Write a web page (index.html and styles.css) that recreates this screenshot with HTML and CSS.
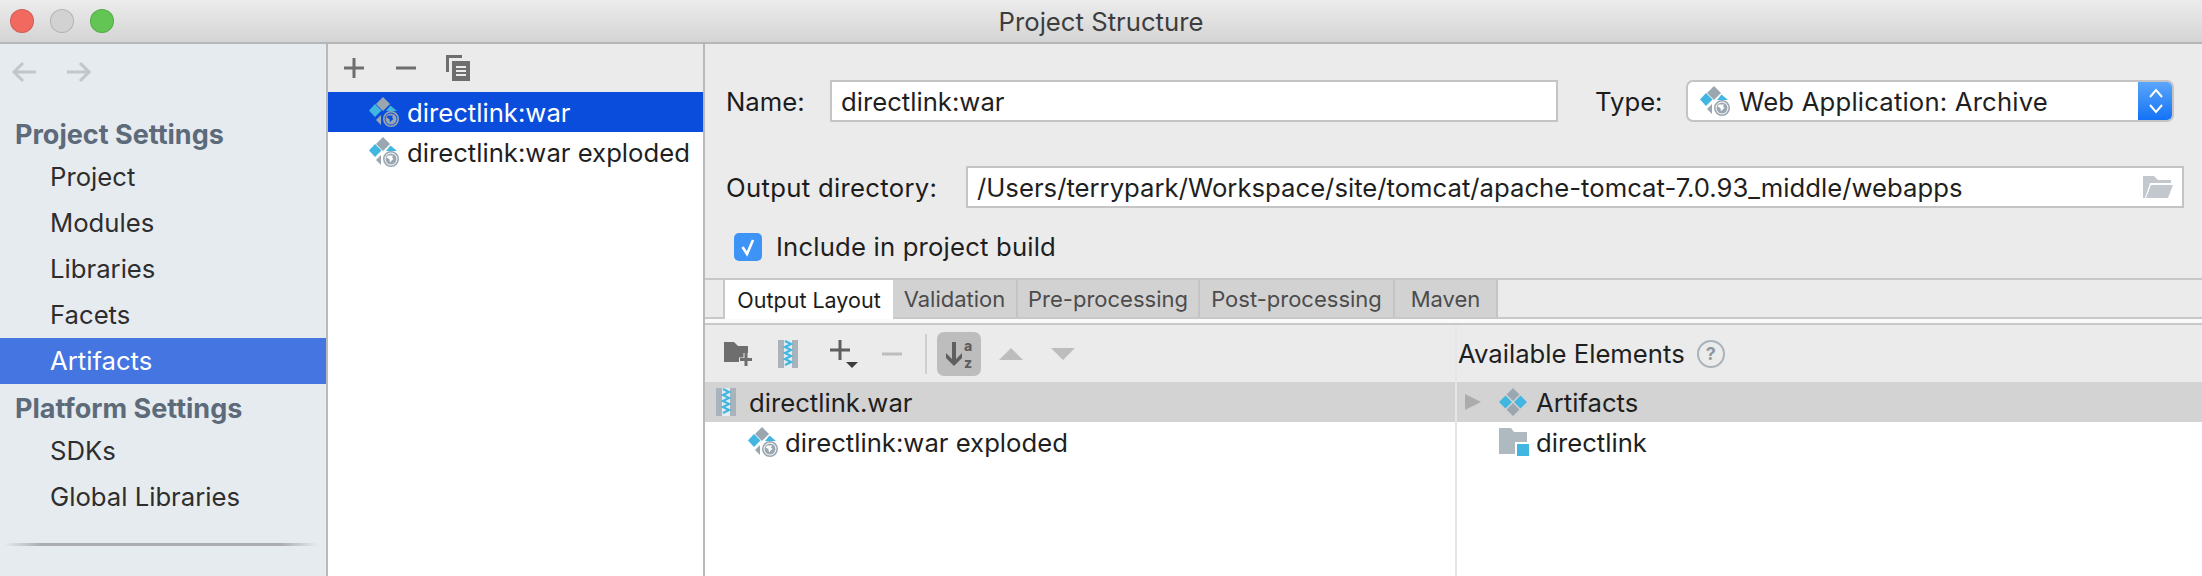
FILE: index.html
```html
<!DOCTYPE html>
<html lang="en">
<head>
<meta charset="utf-8">
<title>Project Structure</title>
<link rel="stylesheet" href="styles.css">
</head>
<body>
<svg class="defs" width="0" height="0" aria-hidden="true">
  <defs>
    <symbol id="web" viewBox="0 0 30 30">
      <path d="M14 0l7 7-7 7-7-7z" fill="#9aa7b0"/>
      <path d="M6 7l6.500 6.500L6 20l-6-6.500z" fill="#40b6e0"/>
      <path d="M21.500 8.500L28 14H17z" fill="#40b6e0"/>
      <path d="M12 18v10L7 23z" fill="#9aa7b0"/>
      <circle cx="22" cy="22" r="7.200" fill="none" stroke="#9aa7b0" stroke-width="1.600"/>
      <path fill-rule="evenodd" d="M22 16.500a5.500 5.500 0 1 1 0 11a5.500 5.500 0 1 1 0-11zM19 18.500l-1.500 2 3 1.500 .5 3.500 2-2.500 1.500-1-1.500-1.500 1-2z" fill="#9aa7b0"/>
    </symbol>
    <symbol id="zip" viewBox="0 0 20 28">
      <path d="M0 0h6v28H0zM14 0h6v28h-6z" fill="#a8b3bb"/>
      <path d="M6 0h8v28H6z" fill="#e4ecf0"/>
      <path d="M7 1l6 3-6 3 6 3-6 3 6 3-6 3 6 3-6 3" fill="none" stroke="#40b6e0" stroke-width="2.200"/>
    </symbol>
  </defs>
</svg>
<div class="window">
  <header class="titlebar">
    <div class="lights"><span class="light red"></span><span class="light gray"></span><span class="light green"></span></div>
    <div class="title">Project Structure</div>
  </header>
  <div class="main">
    <aside class="sidebar">
      <div class="nav-arrows">
        <svg width="28" height="24" viewBox="0 0 28 24"><path d="M26 12H4M13 3l-9 9 9 9" fill="none" stroke="#c3c6c9" stroke-width="3"/></svg>
        <svg width="28" height="24" viewBox="0 0 28 24"><path d="M2 12h22M15 3l9 9-9 9" fill="none" stroke="#c3c6c9" stroke-width="3"/></svg>
      </div>
      <div class="section first">Project Settings</div>
      <div class="item">Project</div>
      <div class="item">Modules</div>
      <div class="item">Libraries</div>
      <div class="item">Facets</div>
      <div class="item active">Artifacts</div>
      <div class="section platform">Platform Settings</div>
      <div class="item">SDKs</div>
      <div class="item">Global Libraries</div>
      <div class="sidebar-rule"></div>
    </aside>
    <section class="list-panel">
      <div class="list-toolbar">
        <svg class="ic-plus" width="20" height="20" viewBox="0 0 20 20"><path d="M8.500 0h3v8.500H20v3h-8.500V20h-3v-8.500H0v-3h8.500z" fill="#6e6e6e"/></svg>
        <svg class="ic-minus" width="20" height="20" viewBox="0 0 20 20"><path d="M0 8.500h20v3H0z" fill="#6e6e6e"/></svg>
        <svg class="ic-copy" width="24" height="26" viewBox="0 0 24 26"><path d="M0 0h16v3H3v14H0z" fill="#6e6e6e"/><path fill-rule="evenodd" d="M6 6h18v20H6zM10 11v2h10v-2zM10 15v2h10v-2zM10 19v2h10v-2z" fill="#6e6e6e"/></svg>
      </div>
      <div class="list-row selected"><svg class="web-icon" width="30" height="30"><use href="#web"/></svg><span>directlink:war</span></div>
      <div class="list-row"><svg class="web-icon" width="30" height="30"><use href="#web"/></svg><span>directlink:war exploded</span></div>
    </section>
    <section class="detail">
      <div class="form">
        <div class="form-row name-row">
          <label class="lbl lbl-name">Name:</label>
          <div class="input name-input">directlink:war</div>
          <label class="lbl lbl-type">Type:</label>
          <div class="combo">
            <svg class="web-icon" width="30" height="30"><use href="#web"/></svg>
            <span class="combo-text">Web Application: Archive</span>
            <span class="combo-btn"><svg width="16" height="30" viewBox="0 0 16 30"><path d="M2 11l6-7 6 7M2 19l6 7 6-7" fill="none" stroke="#fff" stroke-width="2"/></svg></span>
          </div>
        </div>
        <div class="form-row dir-row">
          <label class="lbl lbl-dir">Output directory:</label>
          <div class="input dir-input">
            <span>/Users/terrypark/Workspace/site/tomcat/apache-tomcat-7.0.93_middle/webapps</span>
            <svg width="30" height="22" viewBox="0 0 30 22"><path d="M0 0h11l4 4h13v3H7L2 22H0z" fill="#c2c8cd"/><path d="M8 9h22l-5 13H3z" fill="#c2c8cd"/></svg>
          </div>
        </div>
        <div class="check-row">
          <span class="check"><svg width="28" height="28" viewBox="0 0 28 28"><path d="M8.500 14l4.500 7 6-14" fill="none" stroke="#fff" stroke-width="2.600"/></svg></span>
          <span class="check-label">Include in project build</span>
        </div>
      </div>
      <div class="tabs">
        <div class="tab current">Output Layout</div>
        <div class="tab t-val">Validation</div>
        <div class="tab t-pre">Pre-processing</div>
        <div class="tab t-post">Post-processing</div>
        <div class="tab t-mvn">Maven</div>
      </div>
      <div class="tabs-gap"></div>
      <div class="layout">
        <div class="layout-left">
          <div class="layout-toolbar">
            <svg class="t-folder" width="28" height="24" viewBox="0 0 28 24"><path d="M0 0h10l4 4h10v7h-4.500v4.500H15V20H0z" fill="#6e6e6e"/><path d="M20.500 11h3v5H28v3h-4.500v5h-3v-5H16v-3h4.500z" fill="#6e6e6e"/></svg>
            <svg class="t-zip" width="20" height="28"><use href="#zip"/></svg>
            <svg class="t-plus" width="28" height="28" viewBox="0 0 28 28"><path d="M8.500 0h3v8.500H20v3h-8.500V20h-3v-8.500H0v-3h8.500z" fill="#5f5f5f"/><path d="M16 22h12l-6 6z" fill="#3c3c3c"/></svg>
            <svg class="t-minus" width="20" height="20" viewBox="0 0 20 20"><path d="M0 8.500h20v3H0z" fill="#bdbdbd"/></svg>
            <span class="t-sep"></span>
            <span class="t-sort">
              <svg width="16" height="24" viewBox="0 0 16 24"><path d="M6 0h4v17l6-6v5l-8 8-8-8v-5l6 6z" fill="#5f5f5f"/></svg>
              <span class="az"><span>a</span><span>z</span></span>
            </span>
            <svg class="t-up" width="24" height="12" viewBox="0 0 24 12"><path d="M12 0l12 12H0z" fill="#bdbdbd"/></svg>
            <svg class="t-down" width="24" height="12" viewBox="0 0 24 12"><path d="M0 0h24L12 12z" fill="#bdbdbd"/></svg>
          </div>
          <div class="tree-row hl root-row"><svg width="20" height="28"><use href="#zip"/></svg><span>directlink.war</span></div>
          <div class="tree-row child-row"><svg class="web-icon" width="30" height="30"><use href="#web"/></svg><span>directlink:war exploded</span></div>
        </div>
        <div class="layout-right">
          <div class="avail-head"><span>Available Elements</span><span class="help">?</span></div>
          <div class="tree-row hl avail-row">
            <svg class="arrow" width="16" height="16" viewBox="0 0 16 16"><path d="M0 0l16 8-16 8z" fill="#acacac"/></svg>
            <svg width="28" height="28" viewBox="0 0 28 28"><path d="M14 0l6.500 6.500L14 13 7.500 6.500zM14 15l6.500 6.500L14 28l-6.500-6.500z" fill="#9aa7b0"/><path d="M6.500 7.500L13 14l-6.500 6.500L0 14zM21.500 7.500L28 14l-6.500 6.500L15 14z" fill="#40b6e0"/></svg>
            <span>Artifacts</span>
          </div>
          <div class="tree-row avail-row no-arrow">
            <svg width="30" height="28" viewBox="0 0 30 28"><path d="M0 0h12l3 4h13v22H0z" fill="#aeb9c0"/><path d="M16 14h16v14H16z" fill="#fff"/><path d="M18 16h12v12H18z" fill="#40b6e0"/></svg>
            <span>directlink</span>
          </div>
        </div>
      </div>
    </section>
  </div>
</div>
</body>
</html>
```
FILE: styles.css
```css
* { box-sizing: border-box; }
html, body { margin: 0; padding: 0; }
body { width: 2202px; height: 576px; overflow: hidden; font-family: Inter, "Liberation Sans", sans-serif; font-size: 25.7px; color: #1f1f1f; background: #fff; }
svg { display: block; flex: none; }
.defs { position: absolute; }
.window { display: flex; flex-direction: column; height: 576px; }

.titlebar { height: 44px; flex: none; display: flex; align-items: center; position: relative; background: linear-gradient(#ececec, #d4d4d4); border-bottom: 2px solid #b6b6b6; }
.lights { display: flex; gap: 16px; padding-left: 10px; }
.light { width: 24px; height: 24px; border-radius: 50%; border: 1px solid rgba(0,0,0,.14); }
.red { background: #f1695f; }
.gray { background: #d2d2d2; }
.green { background: #62c554; }
.title { position: absolute; left: 0; right: 0; text-align: center; color: #3d3d3d; }

.main { flex: 1; display: flex; min-height: 0; }

.sidebar { width: 328px; flex: none; background: #e6ebf0; border-right: 2px solid #b9b9b9; display: flex; flex-direction: column; }
.nav-arrows { display: flex; gap: 27px; padding: 16px 0 0 10px; height: 66px; }
.section { font-weight: 700; font-size: 27px; color: #5c6a79; padding-left: 15px; height: 44px; }
.section.first { line-height: 50px; }
.section.platform { line-height: 50px; }
.item { height: 46px; line-height: 45px; padding-left: 50px; color: #2e2e2e; }
.item.active { background: #4475e0; color: #fff; }
.sidebar-rule { height: 3px; margin: 23px 8px 0 4px; background: linear-gradient(90deg, rgba(170,172,175,0), #aaacaf 12%, #aaacaf 88%, rgba(170,172,175,0)); }

.list-panel { width: 377px; flex: none; border-right: 2px solid #b9b9b9; background: #fff; }
.list-toolbar { height: 48px; background: #ebebeb; display: flex; align-items: center; padding-left: 16px; }
.ic-plus { margin-right: 32px; }
.ic-minus { margin-right: 30px; }
.list-row { height: 40px; display: flex; align-items: center; padding-left: 41px; gap: 8px; color: #1f1f1f; }
.list-row.selected { background: #0a4cdb; color: #fff; }

.detail { flex: 1; min-width: 0; background: #fff; display: flex; flex-direction: column; }
.form { background: #ebebeb; height: 234px; padding: 36px 0 0 21px; flex: none; }
.form-row { display: flex; align-items: center; height: 42px; }
.lbl { color: #1c1c1c; }
.lbl-name { width: 104px; }
.lbl-type { margin-left: 37px; width: 91px; }
.lbl-dir { width: 240px; letter-spacing: .3px; }
.input { height: 42px; background: #fff; border: 2px solid #c4c4c4; padding-left: 9px; display: flex; align-items: center; }
.name-input { width: 728px; }
.dir-row { margin-top: 44px; }
.dir-input { width: 1218px; justify-content: space-between; padding-right: 9px; }
.combo { width: 488px; height: 42px; display: flex; align-items: center; background: #fff; border: 2px solid #c4c4c4; border-radius: 7px; padding-left: 12px; position: relative; overflow: hidden; }
.combo-text { margin-left: 9px; letter-spacing: .18px; }
.combo-btn { position: absolute; right: -2px; top: -2px; bottom: -2px; width: 36px; background: linear-gradient(#5fa8fb, #0f70f5); display: flex; align-items: center; justify-content: center; }
.check-row { display: flex; align-items: center; margin: 23px 0 0 8px; gap: 14px; }
.check { width: 28px; height: 28px; border-radius: 5px; background: #3d94f6; }
.check-label { letter-spacing: .18px; }

.tabs { height: 41px; flex: none; display: flex; background: #ebebeb; border-top: 2px solid #c8c8c8; border-bottom: 2px solid #c8c8c8; padding-left: 20px; font-size: 22px; }
.tab { height: 37px; background: #d2d2d2; color: #4c4c4c; display: flex; align-items: center; justify-content: center; border-right: 2px solid #c4c4c4; }
.tab.current { width: 168px; height: 39px; font-size: 21.5px; background: #fff; color: #1c1c1c; border-right: 0; box-shadow: -2px 0 0 #c8c8c8; position: relative; }
.t-val { width: 125px; }
.t-pre { width: 182px; }
.t-post { width: 195px; }
.t-mvn { width: 103px; }
.tabs-gap { height: 6px; flex: none; background: #fafafa; border-bottom: 2px solid #c8c8c8; }

.layout { flex: 1; display: flex; min-height: 0; }
.layout-left { width: 752px; flex: none; border-right: 2px solid #e6e6e6; }
.layout-right { flex: 1; min-width: 0; }
.layout-toolbar { height: 57px; background: #ebebeb; display: flex; align-items: center; padding-left: 19px; }
.t-folder { margin-right: 26px; }
.t-zip { margin-right: 32px; }
.t-plus { margin-right: 24px; }
.t-sep { width: 2px; height: 40px; background: #cfcfcf; margin: 0 10px 0 23px; }
.t-sort { width: 44px; height: 44px; border-radius: 7px; background: #bdbdbd; display: flex; align-items: center; justify-content: center; gap: 2px; margin-right: 18px; }
.az { display: flex; flex-direction: column; font-size: 14px; font-weight: 800; line-height: 17px; color: #5f5f5f; }
.az span { display: block; height: 17px; }
.t-up { margin-right: 28px; }
.tree-row { height: 40px; display: flex; align-items: center; }
.hl { background: #d3d3d3; }
.root-row { padding-left: 11px; gap: 13px; }
.child-row { padding-left: 43px; gap: 7px; }
.avail-head { height: 57px; background: #ebebeb; display: flex; align-items: center; padding-left: 1px; gap: 12px; }
.help { width: 28px; height: 28px; border-radius: 50%; border: 2px solid #aab3ba; color: #8f989f; font-size: 18px; font-weight: 700; display: flex; align-items: center; justify-content: center; }
.avail-row { padding-left: 8px; }
.avail-row .arrow { margin-right: 18px; }
.avail-row span { margin-left: 9px; }
.no-arrow { padding-left: 42px; }
.no-arrow span { margin-left: 7px; }
```
